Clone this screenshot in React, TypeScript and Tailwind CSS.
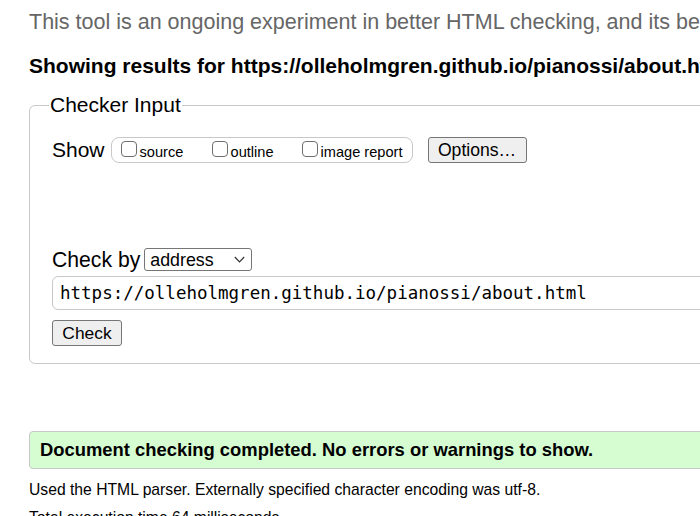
import React from "react";

function Box() {
  return (
    <span className="inline-block w-[16px] h-[16px] border border-[#6f6f6f] rounded-[4px] bg-white self-start mt-[2px]" />
  );
}

export default function App() {
  return (
    <div
      className="w-[700px] h-[516px] overflow-hidden bg-white text-black"
      style={{ fontFamily: '"Liberation Sans", Arial, sans-serif' }}
    >
      <div className="w-[1000px] pl-[29px]">
        <p className="mt-[10px] text-[21.5px] leading-[24px] text-[#666] whitespace-nowrap">
          This tool is an ongoing experiment in better HTML checking, and its behavior remains subject to change
        </p>
        <p className="mt-[20px] text-[21px] leading-[24px] font-bold whitespace-nowrap">
          Showing results for https://olleholmgren.github.io/pianossi/about.html
        </p>
        <fieldset className="mt-[15px] w-[800px] border border-[#c8c8c8] rounded-[6px] pl-[22px] pb-[17px]">
          <legend className="text-[21px] leading-[24px] px-[1px] ml-[-3px]">Checker Input</legend>
          <div className="flex items-center h-[26px] mt-[20px]">
            <span className="text-[21px] leading-[24px]">Show</span>
            <div className="ml-[6px] w-[302px] h-[26px] border border-[#c8c8c8] rounded-[8px] flex items-center pl-[9px] text-[14.6px] leading-[18px]">
              <label className="flex items-center w-[91px]">
                <Box />
                <span className="ml-[3px] mt-[4px]">source</span>
              </label>
              <label className="flex items-center w-[90px]">
                <Box />
                <span className="ml-[3px] mt-[4px]">outline</span>
              </label>
              <label className="flex items-center">
                <Box />
                <span className="ml-[3px] mt-[4px]">image report</span>
              </label>
            </div>
            <button className="ml-[15px] w-[99px] h-[26px] bg-[#efefef] border border-[#767676] rounded-[3px] text-[17.6px] leading-[20px]">
              Options…
            </button>
          </div>
          <div className="flex items-center mt-[85px] h-[23px]">
            <span className="text-[21.2px] leading-[24px]">Check by</span>
            <div className="ml-[4px] w-[108px] h-[23px] border border-[#767676] rounded-[3px] bg-white flex items-center pl-[5px] pr-[6px] text-[17.8px] leading-[20px]">
              <span className="flex-1">address</span>
              <svg width="11" height="7" viewBox="0 0 11 7" fill="none">
                <path d="M0.8 1 L5.5 5.8 L10.2 1" stroke="#333" strokeWidth="1.2" />
              </svg>
            </div>
          </div>
          <div
            className="mt-[5px] h-[34px] w-[760px] border border-[#c8c8c8] rounded-[6px] flex items-center pl-[7px] text-[17.5px]"
            style={{ fontFamily: '"DejaVu Sans Mono", monospace' }}
          >
            https://olleholmgren.github.io/pianossi/about.html
          </div>
          <button className="mt-[10px] w-[70px] h-[26px] bg-[#efefef] border border-[#767676] rounded-[3px] text-[17.4px] leading-[20px]">
            Check
          </button>
        </fieldset>
        <div className="mt-[67px] w-[800px] h-[38px] bg-[#d6fcd2] border border-[#c8c8c8] rounded-[4px] flex items-center pl-[10px] text-[18.4px] font-bold">
          Document checking completed. No errors or warnings to show.
        </div>
        <p className="mt-[11px] text-[15.7px] leading-[20px] whitespace-nowrap">
          Used the HTML parser. Externally specified character encoding was utf-8.
        </p>
        <p className="mt-[8px] text-[15.7px] leading-[20px] whitespace-nowrap">
          Total execution time 64 milliseconds.
        </p>
      </div>
    </div>
  );
}
